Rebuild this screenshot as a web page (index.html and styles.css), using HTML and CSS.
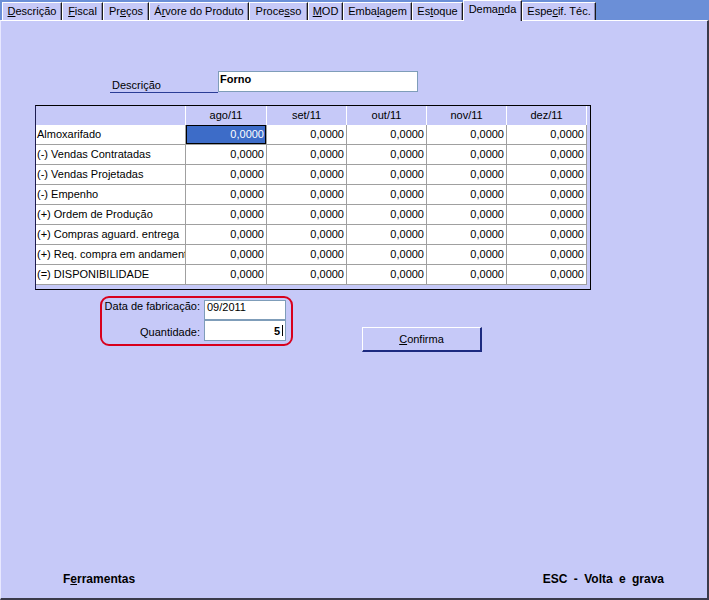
FILE: index.html
```html
<!DOCTYPE html>
<html lang="pt">
<head>
<meta charset="utf-8">
<title>Demanda</title>
<link rel="stylesheet" href="styles.css">
</head>
<body>
<div class="app">
  <div class="tabs">
    <div class="tab t1"><u>D</u>escrição</div>
    <div class="tab t2"><u>F</u>iscal</div>
    <div class="tab t3">Pr<u>e</u>ços</div>
    <div class="tab t4">Á<u>r</u>vore do Produto</div>
    <div class="tab t5">Proce<u>s</u>so</div>
    <div class="tab t6"><u>M</u>OD</div>
    <div class="tab t7">Emba<u>l</u>agem</div>
    <div class="tab t8">Es<u>t</u>oque</div>
    <div class="tab t9 active">Dema<u>n</u>da</div>
    <div class="tab t10">Espe<u>c</u>if. Téc.</div>
  </div>
  <div class="panel">
    <div class="desc-row">
      <div class="desc-label">Descrição</div>
      <div class="field desc-field">Forno</div>
    </div>
    <div class="grid-box">
      <table class="grid">
        <colgroup>
          <col class="col-label"><col class="col-first"><col class="col-val"><col class="col-val"><col class="col-val"><col class="col-val">
        </colgroup>
        <thead>
          <tr><th></th><th>ago/11</th><th>set/11</th><th>out/11</th><th>nov/11</th><th>dez/11</th></tr>
        </thead>
        <tbody>
          <tr><td class="lbl">Almoxarifado</td><td class="num sel">0,0000</td><td class="num">0,0000</td><td class="num">0,0000</td><td class="num">0,0000</td><td class="num">0,0000</td></tr>
          <tr><td class="lbl">(-) Vendas Contratadas</td><td class="num">0,0000</td><td class="num">0,0000</td><td class="num">0,0000</td><td class="num">0,0000</td><td class="num">0,0000</td></tr>
          <tr><td class="lbl">(-) Vendas Projetadas</td><td class="num">0,0000</td><td class="num">0,0000</td><td class="num">0,0000</td><td class="num">0,0000</td><td class="num">0,0000</td></tr>
          <tr><td class="lbl">(-) Empenho</td><td class="num">0,0000</td><td class="num">0,0000</td><td class="num">0,0000</td><td class="num">0,0000</td><td class="num">0,0000</td></tr>
          <tr><td class="lbl">(+) Ordem de Produção</td><td class="num">0,0000</td><td class="num">0,0000</td><td class="num">0,0000</td><td class="num">0,0000</td><td class="num">0,0000</td></tr>
          <tr><td class="lbl">(+) Compras aguard. entrega</td><td class="num">0,0000</td><td class="num">0,0000</td><td class="num">0,0000</td><td class="num">0,0000</td><td class="num">0,0000</td></tr>
          <tr><td class="lbl">(+) Req. compra em andament</td><td class="num">0,0000</td><td class="num">0,0000</td><td class="num">0,0000</td><td class="num">0,0000</td><td class="num">0,0000</td></tr>
          <tr><td class="lbl">(=) DISPONIBILIDADE</td><td class="num">0,0000</td><td class="num">0,0000</td><td class="num">0,0000</td><td class="num">0,0000</td><td class="num">0,0000</td></tr>
        </tbody>
      </table>
    </div>
    <div class="lower">
      <div class="redbox">
        <div class="flabel flabel1">Data de fabricação:</div>
        <div class="field small-field">09/2011</div>
        <div class="flabel flabel2">Quantidade:</div>
        <div class="field small-field qty"><b>5</b><span class="caret"></span></div>
      </div>
      <div class="btn"><u>C</u>onfirma</div>
    </div>
    <div class="footer">
      <span>F<u>e</u>rramentas</span>
      <span class="esc">ESC - Volta e grava</span>
    </div>
  </div>
</div>
</body>
</html>
```
FILE: styles.css
```css
* { box-sizing: border-box; }
html, body { margin: 0; padding: 0; }
body {
  font-family: "Liberation Sans", Arial, sans-serif;
  font-size: 11px;
  color: #000;
  background: #c6c9f8;
}
.app {
  width: 709px;
  height: 600px;
  display: flex;
  flex-direction: column;
  background: #c6c9f8;
  overflow: hidden;
}
.tabs {
  height: 20px;
  flex: none;
  background: #6b8fd7;
  display: flex;
  align-items: flex-end;
  padding-left: 2px;
}
.tab {
  height: 18px;
  line-height: 17px;
  text-align: center;
  white-space: nowrap;
  background: #c6c9f8;
  border-top: 1px solid #fff;
  border-left: 1px solid #fff;
  border-right: 1px solid #1a1a1a;
  box-shadow: inset -1px 0 #8a8ab0;
}
.tab.active {
  height: 21px;
  margin-bottom: -1px;
  padding-bottom: 2px;
  position: relative;
  z-index: 1;
}
.t1 { width: 60px; }
.t2 { width: 41px; }
.t3 { width: 46px; }
.t4 { width: 100px; }
.t5 { width: 59px; }
.t6 { width: 35px; }
.t7 { width: 69px; }
.t8 { width: 51px; }
.t9 { width: 59px; }
.t10 { width: 74px; }

.panel {
  flex: 1;
  display: flex;
  flex-direction: column;
  border-top: 1px solid #fff;
  border-left: 1px solid #e8e8ff;
  border-right: 2px solid #3a3a4a;
  border-bottom: 2px solid #3a3a4a;
}
.desc-row {
  display: flex;
  align-items: flex-end;
  margin: 50px 0 0 109px;
}
.desc-label {
  width: 108px;
  padding: 0 0 0 2px;
  line-height: 14px;
  border-bottom: 1px solid #2a3c96;
  margin-bottom: -1px;
}
.field {
  background: #fff;
  border: 1px solid #7f9db9;
  line-height: 13px;
  white-space: nowrap;
}
.desc-field {
  width: 200px;
  height: 21px;
  padding: 1px 0 0 1px;
  font-weight: bold;
}
.grid-box {
  align-self: flex-start;
  margin: 13px 0 0 34px;
  border: 1px solid #000;
  border-left-color: #1c1c50;
  padding: 0 3px 4px 0;
}
.grid {
  border-collapse: separate;
  border-spacing: 0;
  table-layout: fixed;
  width: 551px;
}
.col-label { width: 150px; }
.col-first { width: 81px; }
.col-val { width: 80px; }
.grid th {
  padding: 0;
  line-height: 19px;
  font-weight: normal;
  text-align: center;
  background: #c6c9f8;
  border-right: 1px solid #fff;
}
.grid td {
  padding: 0;
  line-height: 19px;
  background: #fff;
  border-right: 1px solid #a0a0a0;
  border-bottom: 1px solid #a0a0a0;
  white-space: nowrap;
  overflow: hidden;
}
.grid td.lbl { padding-left: 1px; }
.grid td.num { text-align: right; padding-right: 2px; }
.grid td.sel {
  background: #3d6cc8;
  color: #fff;
  box-shadow: inset 0 0 0 1px #000;
}
.lower {
  display: flex;
  align-items: flex-start;
  margin-top: 6px;
}
.redbox {
  margin-left: 99px;
  width: 193px;
  height: 50px;
  border: 2px solid #d8001c;
  border-radius: 9px;
  padding: 2px 5px 3px 0;
  display: grid;
  grid-template-columns: 98px 82px;
  grid-template-rows: 20px 21px;
  column-gap: 4px;
}
.flabel {
  text-align: right;
  line-height: 13px;
  align-self: start;
  white-space: nowrap;
}
.flabel2 { margin-top: 6px; }
.small-field { padding-left: 2px; }
.qty {
  text-align: right;
  padding: 4px 2px 0 0;
}
.caret {
  display: inline-block;
  width: 1px;
  height: 11px;
  background: #000;
  margin-left: 2px;
  vertical-align: -1px;
}
.btn {
  margin: 31px 0 0 69px;
  width: 120px;
  height: 25px;
  line-height: 22px;
  text-align: center;
  background: #c6c9f8;
  border-top: 1px solid #fff;
  border-left: 1px solid #fff;
  border-right: 2px solid #1c2a80;
  border-bottom: 2px solid #1c2a80;
}
.footer {
  margin-top: auto;
  display: flex;
  justify-content: space-between;
  padding: 0 43px 12px 62px;
  font-size: 12px;
  font-weight: bold;
  line-height: 14px;
}
.esc { word-spacing: 3px; }
```
